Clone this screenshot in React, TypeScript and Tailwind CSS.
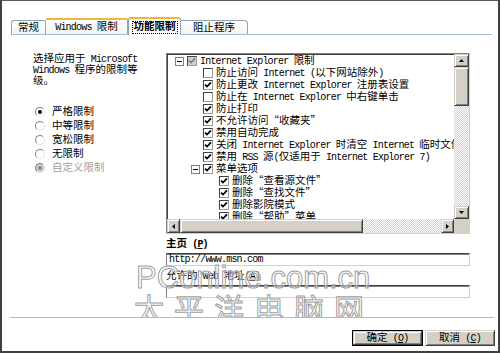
import React from "react";

const LAT = "font-['Liberation_Mono',monospace] text-[10px] tracking-[-0.8px]";
const CJK = "font-['Noto_Sans_CJK_SC',sans-serif] text-[10.5px] [font-feature-settings:'fwid']";

function T({ s }: { s: string }) {
  const parts = s.match(/[\x00-\x7F]+|[^\x00-\x7F]+/g) || [];
  return (
    <span className="whitespace-pre">
      {parts.map((p, i) =>
        /^[\x00-\x7F]/.test(p) ? (
          <span key={i} className={LAT}>
            {p}
          </span>
        ) : (
          <span key={i} className={CJK}>
            {p}
          </span>
        )
      )}
    </span>
  );
}

function L({ s, c }: { s: string; c: string }) {
  const parts = s.match(/[\x00-\x7F]+|[^\x00-\x7F]+/g) || [];
  return (
    <span className="whitespace-pre">
      {parts.map((p, i) =>
        /^[\x00-\x7F]/.test(p) ? (
          <span key={i} className={LAT}>
            {p}
          </span>
        ) : (
          <span key={i} className={CJK}>
            {p}
          </span>
        )
      )}
      <span className={LAT}>
        (<span className="underline underline-offset-1">{c}</span>)
      </span>
    </span>
  );
}

function Arrow({ d }: { d: "up" | "down" | "left" | "right" }) {
  const vert = d === "up" || d === "down";
  const w = vert ? 5 : 3;
  const h = vert ? 3 : 5;
  const pts =
    d === "up" ? "2.5,0 5,3 0,3" : d === "down" ? "0,0 5,0 2.5,3" : d === "left" ? "3,0 3,5 0,2.5" : "0,0 3,2.5 0,5";
  return (
    <svg width={w} height={h} viewBox={`0 0 ${w} ${h}`}>
      <polygon points={pts} fill="#000" />
    </svg>
  );
}

const BTN3D =
  "bg-[#d4d0c8] border border-t-[#d4d0c8] border-l-[#d4d0c8] border-r-[#404040] border-b-[#404040] shadow-[inset_1px_1px_0_#ffffff,inset_-1px_-1px_0_#808080]";
const TRACK =
  "[background-image:repeating-conic-gradient(#d4d0c8_0%_25%,#ffffff_0%_50%)] [background-size:2px_2px]";

function Check({ on, gray }: { on?: boolean; gray?: boolean }) {
  return (
    <span
      className={`w-[10px] h-[10px] shrink-0 flex items-center justify-center border border-t-[#404040] border-l-[#404040] border-r-[#9a9a9a] border-b-[#9a9a9a] ${
        gray ? "bg-[#d4d0c8]" : "bg-white"
      }`}
    >
      {on && (
        <svg width="8" height="8" viewBox="0 0 8 8">
          <path d="M1 3.6 L3 5.6 L7 1.4" fill="none" stroke={gray ? "#808080" : "#000"} strokeWidth="1.7" />
        </svg>
      )}
    </span>
  );
}

function Expander() {
  return (
    <span className="w-[9px] h-[9px] shrink-0 border border-[#808080] bg-white flex items-center justify-center">
      <span className="w-[5px] h-px bg-black" />
    </span>
  );
}

function Radio({ on, disabled }: { on?: boolean; disabled?: boolean }) {
  return (
    <span
      className={`w-[10px] h-[10px] rounded-full shrink-0 flex items-center justify-center border border-t-[#808080] border-l-[#808080] border-r-[#e4e4e4] border-b-[#e4e4e4] ${
        disabled ? "bg-[#cfcfcf]" : "bg-white"
      }`}
    >
      {on && <span className="w-[4px] h-[4px] rounded-full bg-black" />}
      {disabled && <span className="w-[4px] h-[4px] rounded-full bg-[#8a8a8a]" />}
    </span>
  );
}

const rows: { l: number; exp?: boolean; on?: boolean; gray?: boolean; t: string }[] = [
  { l: 0, exp: true, on: true, gray: true, t: "Internet Explorer 限制" },
  { l: 1, t: "防止访问 Internet (以下网站除外)" },
  { l: 1, on: true, t: "防止更改 Internet Explorer 注册表设置" },
  { l: 1, t: "防止在 Internet Explorer 中右键单击" },
  { l: 1, on: true, t: "防止打印" },
  { l: 1, on: true, t: "不允许访问“收藏夹”" },
  { l: 1, on: true, t: "禁用自动完成" },
  { l: 1, on: true, t: "关闭 Internet Explorer 时清空 Internet 临时文件" },
  { l: 1, on: true, t: "禁用 RSS 源(仅适用于 Internet Explorer 7)" },
  { l: 1, exp: true, on: true, t: "菜单选项" },
  { l: 2, on: true, t: "删除“查看源文件”" },
  { l: 2, on: true, t: "删除“查找文件”" },
  { l: 2, on: true, t: "删除影院模式" },
  { l: 2, on: true, t: "删除“帮助”菜单" },
];

const INDENT = ["pl-[8px]", "pl-[24px]", "pl-[40px]"];

const radios: { t: string; on?: boolean; disabled?: boolean }[] = [
  { t: "严格限制", on: true },
  { t: "中等限制" },
  { t: "宽松限制" },
  { t: "无限制" },
  { t: "自定义限制", disabled: true },
];

export default function App() {
  return (
    <div
      lang="zh-CN"
      className="relative w-[500px] h-[353px] overflow-hidden bg-white text-black font-['Liberation_Mono',monospace] text-[10px] leading-none border-t border-l-2 border-r-2 border-b-2 border-t-[#5a5a5a] border-l-[#404040] border-r-[#404040] border-b-[#404040] flex flex-col"
    >
      {/* Tabs */}
      <div className="ml-[9px] mr-[6px] h-[34px] border-b border-[#a9bccf] flex items-end shrink-0">
        <div className="w-[35px] h-[14px] border border-b-0 border-[#8fa3b8] rounded-tl-[3px] rounded-tr-[2px] bg-gradient-to-b from-white to-[#f4f4f0] flex items-center justify-center">
          <T s="常规" />
        </div>
        <div className="w-[82px] h-[16px] border-r border-t-2 border-t-[#f2b640] border-r-[#8fa3b8] rounded-tr-[2px] bg-gradient-to-b from-white to-[#f4f4f0] flex items-center justify-center">
          <T s="Windows 限制" />
        </div>
        <div className="relative w-[53px] h-[18px] -mb-px border-x border-t-2 border-x-[#8fa3b8] border-t-[#f2b640] rounded-t-[3px] bg-white flex items-center justify-center font-bold">
          <span className="h-[13px] flex items-center border border-dotted border-black px-px">
            <T s="功能限制" />
          </span>
        </div>
        <div className="w-[67px] h-[14px] border-r border-t border-[#8fa3b8] rounded-tr-[4px] bg-gradient-to-b from-white to-[#f4f4f0] flex items-center justify-center">
          <T s="阻止程序" />
        </div>
      </div>

      {/* Body */}
      <div className="mt-[18px] flex shrink-0">
        {/* Left column */}
        <div className="w-[164px] shrink-0">
          <div className="pl-[31px]">
            <div className="h-[11px] flex items-center">
              <T s="选择应用于 Microsoft" />
            </div>
            <div className="h-[11px] flex items-center">
              <T s="Windows 程序的限制等" />
            </div>
            <div className="h-[11px] flex items-center">
              <T s="级。" />
            </div>
          </div>
          <div className="mt-[19px] pl-[33px] flex flex-col">
            {radios.map((r, i) => (
              <div key={i} className="h-[14px] flex items-center gap-[7px]">
                <Radio on={r.on} disabled={r.disabled} />
                <span className={r.disabled ? "text-[#a0a0a0]" : ""}>
                  <T s={r.t} />
                </span>
              </div>
            ))}
          </div>
        </div>

        {/* Right column */}
        <div className="w-[304px] shrink-0 flex flex-col">
          <div className="h-[181px] border border-t-[#808080] border-l-[#808080] border-r-[#d4d0c8] border-b-[#d4d0c8] shadow-[inset_1px_1px_0_#404040] grid grid-cols-[1fr_15px] grid-rows-[1fr_14px] bg-white">
            <div className="overflow-hidden pt-px">
              {rows.map((r, i) => (
                <div key={i} className={`h-[12px] flex items-center whitespace-pre ${INDENT[r.l]}`}>
                  <span className="w-[9px] mr-[3px] shrink-0 flex">{r.exp && <Expander />}</span>
                  <Check on={r.on} gray={r.gray} />
                  <span className="ml-[3px]">
                    <T s={r.t} />
                  </span>
                </div>
              ))}
            </div>
            <div className="flex flex-col">
              <div className={`h-[13px] flex items-center justify-center ${BTN3D}`}>
                <Arrow d="up" />
              </div>
              <div className={`h-[39px] ${BTN3D}`} />
              <div className={`flex-1 ${TRACK}`} />
              <div className={`h-[13px] flex items-center justify-center ${BTN3D}`}>
                <Arrow d="down" />
              </div>
            </div>
            <div className="flex">
              <div className={`w-[13px] flex items-center justify-center ${BTN3D}`}>
                <Arrow d="left" />
              </div>
              <div className={`w-[183px] ${BTN3D}`} />
              <div className={`flex-1 ${TRACK}`} />
              <div className={`w-[13px] flex items-center justify-center ${BTN3D}`}>
                <Arrow d="right" />
              </div>
            </div>
            <div className="bg-[#d4d0c8]" />
          </div>

          <div className="h-[19px] flex items-center font-bold">
            <L s="主页 " c="P" />
          </div>
          <div className="h-[13px] border border-t-[#404040] border-l-[#808080] border-r-[#d4d0c8] border-b-[#d4d0c8] shadow-[inset_0_1px_0_#808080] flex items-center pl-[2px]">
            <T s="http://www.msn.com" />
          </div>
          <div className="h-[19px] flex items-center">
            <L s="允许的 Web 地址" c="A" />
          </div>
          <div className="h-[13px] border border-t-[#404040] border-l-[#808080] border-r-[#d4d0c8] border-b-[#d4d0c8] shadow-[inset_0_1px_0_#808080]" />
        </div>
      </div>

      {/* Separator */}
      <div className="mt-[19px] ml-[8px] mr-[4px] h-px bg-[#a9bccf] shrink-0" />

      {/* Buttons */}
      <div className="mt-[12px] pr-[3px] flex justify-end gap-[2px]">
        <div className="w-[71px] h-[16px] border border-black flex">
          <div className={`flex-1 flex items-center justify-center ${BTN3D}`}>
            <L s="确定 " c="O" />
          </div>
        </div>
        <div className={`w-[70px] h-[16px] flex items-center justify-center ${BTN3D}`}>
          <L s="取消 " c="C" />
        </div>
      </div>

      {/* Watermark */}
      <div className="absolute left-[134px] top-[262px] pointer-events-none font-['Liberation_Sans',sans-serif] text-[31px] leading-[30px] text-white/40 [-webkit-text-stroke:1px_#a0a0a0] whitespace-nowrap">
        PConline.com.cn
      </div>
      <div className="absolute left-[132px] top-[291px] h-[25px] overflow-hidden pointer-events-none">
        <div className="font-['Noto_Sans_CJK_SC',sans-serif] text-[30px] leading-[30px] tracking-[10px] text-white/40 [-webkit-text-stroke:1px_#a0a0a0] whitespace-nowrap">
          太平洋电脑网
        </div>
      </div>
    </div>
  );
}
